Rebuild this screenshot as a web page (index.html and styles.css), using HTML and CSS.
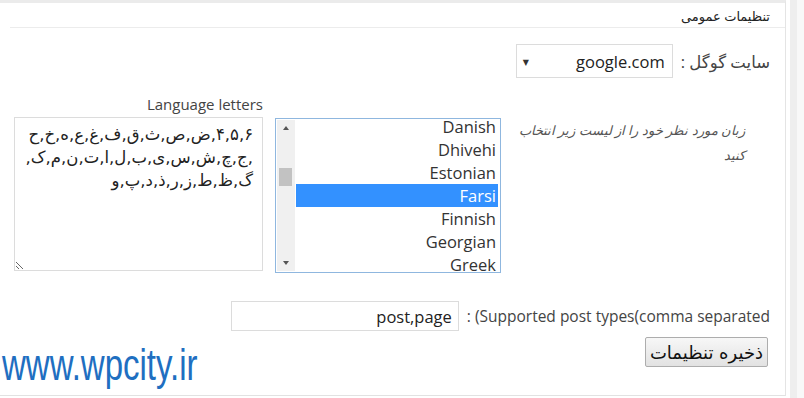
FILE: index.html
```html
<!DOCTYPE html>
<html lang="fa">
<head>
    <meta charset="UTF-8">
    <title>تنظیمات عمومی</title>
    <link rel="stylesheet" href="styles.css">
</head>
<body>
    <div class="page">
        <div class="panel">
            <!-- Title -->
            <h3 class="panel-title" dir="rtl">تنظیمات عمومی</h3>

            <div class="settings-form" dir="rtl">
                <!-- Google site -->
                <div class="form-row row-google">
                    <label class="field-label fa">سایت گوگل :</label>
                    <div class="fake-select">
                        <span>google.com</span>
                        <span class="select-arrow">▼</span>
                    </div>
                </div>

                <!-- Language -->
                <div class="form-row row-lang">
                    <p class="lang-hint">زبان مورد نظر خود را از لیست زیر انتخاب کنید</p>

                    <div class="listbox">
                        <div class="listbox-scroll">
                            <span class="scroll-arrow up"></span>
                            <span class="scroll-thumb"></span>
                            <span class="scroll-arrow down"></span>
                        </div>
                        <ul class="listbox-items">
                            <li>Danish</li>
                            <li>Dhivehi</li>
                            <li>Estonian</li>
                            <li class="selected">Farsi</li>
                            <li>Finnish</li>
                            <li>Georgian</li>
                            <li>Greek</li>
                        </ul>
                    </div>

                    <div class="letters">
                        <div class="letters-label" dir="ltr">Language letters</div>
                        <textarea class="letters-box" dir="rtl">۴,۵,۶,ض,ص,ث,ق,ف,غ,ع,ه,خ,ح,ج,چ,ش,س,ی,ب,ل,ا,ت,ن,م,ک,گ,ظ,ط,ز,ر,ذ,د,پ,و</textarea>
                    </div>
                </div>

                <!-- Post types -->
                <div class="form-row row-types">
                    <label class="field-label" dir="ltr">: (Supported post types(comma separated</label>
                    <input class="text-input" type="text" value="post,page" dir="ltr">
                </div>

                <div class="form-row row-submit">
                    <button class="save-btn">ذخیره تنظیمات</button>
                </div>
            </div>

            <div class="watermark">www.wpcity.ir</div>
        </div>
        <div class="page-edge"></div>
    </div>
</body>
</html>
```

FILE: styles.css
```css
:root {
    --text: #333;
    --label: #444;
    --border: #dcdcdc;
    --line: #ececec;
    --select-blue: #3391ff;
    --ui-font: 'Open Sans', 'DejaVu Sans', sans-serif;
}

html, body {
    margin: 0;
    padding: 0;
}

body {
    background: #fff;
    color: var(--text);
    font-family: var(--ui-font);
    overflow: hidden;
}

.page {
    display: flex;
    height: 398px;
}

.panel {
    position: relative;
    width: 785px;
    height: 392px;
    border-top: 3px solid #ebebeb;
    border-right: 1px solid #e4e4e4;
    border-bottom: 1px solid #e2e2e2;
    background: #fff;
}

.page-edge {
    flex: 1;
    background: linear-gradient(to right, #fff 0 4px, #eeeeee 4px 11px, #f8f8f8 11px);
}

.panel-title {
    margin: 0 0 0 10px;
    padding: 4px 15px 2px 0;
    font-size: 13px;
    line-height: 18px;
    font-weight: normal;
    color: #222;
    border-bottom: 1px solid var(--line);
}

.settings-form {
    padding: 0 15px 0 14px;
}

.form-row {
    display: flex;
    align-items: center;
    gap: 8px;
}

.field-label {
    font-size: 15.5px;
    color: var(--label);
    white-space: nowrap;
}

.field-label.fa {
    font-size: 16.5px;
}

/* google */
.row-google {
    margin-top: 16px;
}

.fake-select {
    display: flex;
    justify-content: space-between;
    align-items: center;
    width: 157px;
    height: 34px;
    box-sizing: border-box;
    padding: 0 7px 0 6px;
    border: 1px solid var(--border);
    background: #fff;
    font-size: 16.5px;
    color: #222;
}

.select-arrow {
    font-size: 8px;
    color: #333;
}

/* language */
.row-lang {
    align-items: flex-start;
    gap: 0;
    margin-top: 16px;
}

.lang-hint {
    width: 235px;
    margin: 24px 25px 0 9px;
    font-size: 13px;
    line-height: 25px;
    font-style: italic;
    color: #555;
}

.listbox {
    display: flex;
    direction: ltr;
    width: 226px;
    height: 155px;
    box-sizing: border-box;
    margin-top: 24px;
    border: 1px solid #8fb7df;
    background: #fff;
    overflow: hidden;
}

.listbox-scroll {
    position: relative;
    width: 18px;
    margin: 1px 0 1px 1px;
    background: #f0f0f0;
}

.scroll-arrow {
    position: absolute;
    left: 6px;
    width: 0;
    height: 0;
    border-left: 3px solid transparent;
    border-right: 3px solid transparent;
}

.scroll-arrow.up {
    top: 6px;
    border-bottom: 4px solid #555;
}

.scroll-arrow.down {
    bottom: 6px;
    border-top: 4px solid #555;
}

.scroll-thumb {
    position: absolute;
    top: 48px;
    left: 2px;
    width: 13px;
    height: 18px;
    background: #c2c2c2;
}

.listbox-items {
    flex: 1;
    list-style: none;
    margin: -4px 2px 0 1px;
    padding: 0;
    text-align: right;
}

.listbox-items li {
    height: 23px;
    line-height: 23px;
    padding-right: 2px;
    font-size: 16.5px;
    color: #333;
}

.listbox-items li.selected {
    background: var(--select-blue);
    color: #fff;
}

.letters {
    width: 249px;
    margin-right: 12px;
}

.letters-label {
    height: 20px;
    margin-bottom: 3px;
    font-size: 15px;
    line-height: 20px;
    text-align: right;
    color: var(--label);
}

.letters-box {
    display: block;
    width: 249px;
    height: 154px;
    box-sizing: border-box;
    padding: 5px 9px 5px 10px;
    border: 1px solid var(--border);
    font-family: 'DejaVu Sans', sans-serif;
    font-size: 16.5px;
    line-height: 23px;
    color: #222;
    resize: both;
}

/* post types */
.row-types {
    margin-top: 28px;
}

.text-input {
    width: 228px;
    height: 30px;
    box-sizing: border-box;
    padding: 0 6px;
    border: 1px solid var(--border);
    font-family: var(--ui-font);
    font-size: 16.5px;
    text-align: right;
    color: #222;
}

.row-submit {
    margin-top: 6px;
}

.save-btn {
    width: 123px;
    height: 30px;
    margin-right: 2px;
    padding: 0;
    border: 1px solid #adadad;
    border-radius: 2px;
    background: linear-gradient(#f7f7f7, #e2e2e2);
    font-family: 'DejaVu Sans', sans-serif;
    font-size: 18px;
    color: #111;
}

.watermark {
    position: absolute;
    left: 2px;
    top: 337px;
    font-family: 'Liberation Sans', Arial, sans-serif;
    font-size: 44px;
    line-height: 50px;
    color: #1f6fc1;
    transform: scaleX(0.75);
    transform-origin: left top;
}
```
